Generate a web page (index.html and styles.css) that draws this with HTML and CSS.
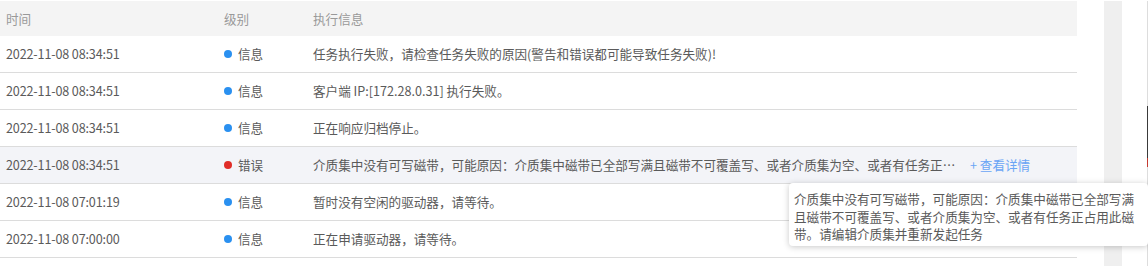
FILE: index.html
```html
<!DOCTYPE html>
<html lang="zh-CN">
<head>
<meta charset="utf-8">
<title>执行日志</title>
<link rel="stylesheet" href="styles.css">
</head>
<body>
<div class="page">
  <div class="log-table">
    <div class="row head">
      <div class="cell">时间</div>
      <div class="cell">级别</div>
      <div class="cell">执行信息</div>
    </div>
    <div class="row">
      <div class="cell time">2022-11-08 08:34:51</div>
      <div class="cell level"><span class="dot info"></span>信息</div>
      <div class="cell msg"><span class="msg-text">任务执行失败，请检查任务失败的原因(警告和错误都可能导致任务失败)!</span></div>
    </div>
    <div class="row">
      <div class="cell time">2022-11-08 08:34:51</div>
      <div class="cell level"><span class="dot info"></span>信息</div>
      <div class="cell msg"><span class="msg-text">客户端 IP:[172.28.0.31] 执行失败。</span></div>
    </div>
    <div class="row">
      <div class="cell time">2022-11-08 08:34:51</div>
      <div class="cell level"><span class="dot info"></span>信息</div>
      <div class="cell msg"><span class="msg-text">正在响应归档停止。</span></div>
    </div>
    <div class="row hover">
      <div class="cell time">2022-11-08 08:34:51</div>
      <div class="cell level"><span class="dot error"></span>错误</div>
      <div class="cell msg"><span class="msg-text clip">介质集中没有可写磁带，可能原因：介质集中磁带已全部写满且磁带不可覆盖写、或者介质集为空、或者有任务正占用此磁带。请编辑介质集并重新发起任务</span><a class="more">+ 查看详情</a></div>
    </div>
    <div class="row">
      <div class="cell time">2022-11-08 07:01:19</div>
      <div class="cell level"><span class="dot info"></span>信息</div>
      <div class="cell msg"><span class="msg-text">暂时没有空闲的驱动器，请等待。</span></div>
    </div>
    <div class="row">
      <div class="cell time">2022-11-08 07:00:00</div>
      <div class="cell level"><span class="dot info"></span>信息</div>
      <div class="cell msg"><span class="msg-text">正在申请驱动器，请等待。</span></div>
    </div>
  </div>
  <div class="side-track"></div>
  <div class="edge-line"></div>
  <div class="tooltip">介质集中没有可写磁带，可能原因：介质集中磁带已全部写满且磁带不可覆盖写、或者介质集为空、或者有任务正占用此磁带。请编辑介质集并重新发起任务</div>
</div>
</body>
</html>
```
FILE: styles.css
```css
html, body {
  margin: 0;
  padding: 0;
  background: #ffffff;
}
body {
  font-family: "Noto Sans CJK SC", "Noto Sans", sans-serif;
  font-size: 12.6px;
  color: #5a5a5a;
}
.page {
  position: relative;
  width: 1148px;
  height: 277px;
  overflow: hidden;
  display: flex;
  align-items: flex-start;
  padding-top: 1px;
  box-sizing: border-box;
}
.log-table {
  width: 1077px;
  flex: none;
}
.row {
  display: grid;
  grid-template-columns: 218px 89px 1fr;
  height: 37px;
  box-sizing: border-box;
  border-bottom: 1px solid #dcdcdc;
  align-items: center;
}
.row.head {
  height: 35px;
  background: #f4f4f4;
  color: #999999;
  border-bottom: none;
}
.row.hover {
  background: #f3f4f8;
}
.cell {
  padding: 0 6px;
  white-space: nowrap;
  line-height: 18px;
}
.time {
  letter-spacing: -0.15px;
}
.level {
  display: flex;
  align-items: center;
}
.dot {
  width: 8px;
  height: 8px;
  border-radius: 50%;
  margin-right: 6px;
  flex: none;
}
.dot.info { background: #2a90f0; }
.dot.error { background: #e02d28; }
.msg {
  display: flex;
  align-items: center;
  min-width: 0;
}
.msg-text.clip {
  width: 646px;
  flex: none;
  overflow: hidden;
  text-overflow: ellipsis;
  white-space: nowrap;
}
.more {
  margin-left: 11px;
  color: #6aa5f5;
  cursor: pointer;
}
.side-track {
  margin-left: 27px;
  width: 18px;
  height: 265px;
  background: #efefef;
  flex: none;
}
.edge-line {
  margin-left: 25px;
  width: 1px;
  height: 265px;
  background: linear-gradient(#dddddd 0, #dddddd 105px, #3a3a3a 105px, #3a3a3a 157px, #c43a30 157px, #c43a30 166px, #dddddd 166px);
  flex: none;
}
.tooltip {
  position: absolute;
  left: 789px;
  top: 183px;
  width: 359px;
  box-sizing: border-box;
  padding: 7px 6px 3px 5px;
  background: #ffffff;
  border-radius: 4px;
  box-shadow: 0 1px 6px rgba(0, 0, 0, 0.22);
  font-size: 12.6px;
  line-height: 17.5px;
  color: #5a5a5a;
}
```
